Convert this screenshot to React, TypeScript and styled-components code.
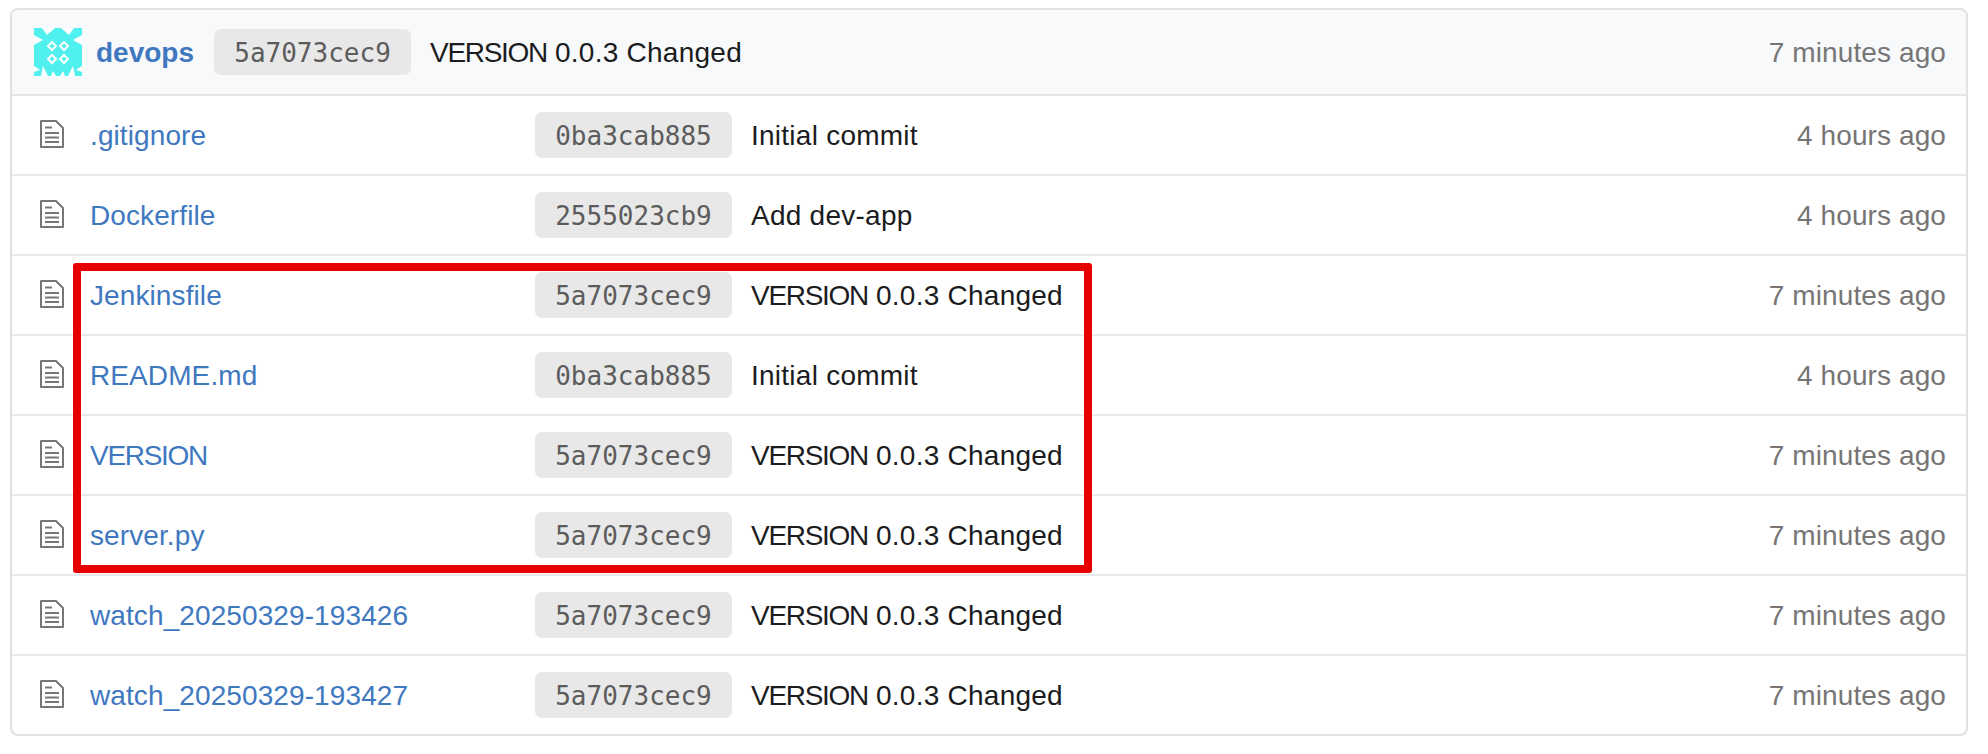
import React from 'react';
import styled, { createGlobalStyle } from 'styled-components';

const GlobalStyle = createGlobalStyle`
  html, body {
    margin: 0;
    padding: 0;
    background: #ffffff;
    font-family: "Liberation Sans", Arial, sans-serif;
  }
`;

const Page = styled.div`
  padding: 8px 20px 18px 10px;
`;

const Card = styled.div`
  position: relative;
  border: 2px solid #e0e1e2;
  border-radius: 8px;
`;

const HeaderRow = styled.div`
  display: flex;
  align-items: center;
  height: 84px;
  padding: 0 20px 0 22px;
  background: #f8f9fb;
  border-radius: 6px 6px 0 0;
  border-bottom: 2px solid #e3e4e5;
`;

const Avatar = styled.svg`
  width: 48px;
  height: 48px;
  flex: none;
  margin-right: 14px;
`;

const Owner = styled.a`
  padding-top: 2px;
  font-size: 28px;
  font-weight: 700;
  color: #4078c0;
  margin-right: 20px;
`;

const Row = styled.div<{ $last?: boolean }>`
  display: flex;
  align-items: center;
  height: 78px;
  padding: 0 20px 0 27px;
  border-bottom: ${props => (props.$last ? 'none' : '2px solid #e8e9ea')};
`;

const IconCell = styled.svg`
  width: 26px;
  height: 30px;
  flex: none;
  margin-right: 25px;
  margin-top: -3px;
`;

const FileName = styled.a`
  width: 445px;
  flex: none;
  padding-top: 2px;
  font-size: 28px;
  letter-spacing: 0.1px;
  color: #4078c0;
`;

const Hash = styled.span`
  flex: none;
  display: inline-flex;
  align-items: center;
  justify-content: center;
  box-sizing: border-box;
  width: 197px;
  height: 46px;
  padding-top: 1px;
  background: #e8e8e8;
  border-radius: 7px;
  font-family: "DejaVu Sans Mono", "Liberation Mono", monospace;
  font-size: 26px;
  color: #5c5c5c;
`;

const Message = styled.span`
  flex: 1;
  margin-left: 19px;
  padding-top: 2px;
  font-size: 28px;
  letter-spacing: 0.25px;
  color: #1b1c1d;
`;

// the capitals sit closer together in the reference's font
const Kerned = styled.span`
  letter-spacing: -1.3px;
`;

const Age = styled.span`
  flex: none;
  padding-top: 2px;
  font-size: 28px;
  letter-spacing: 0.1px;
  color: #767676;
`;

const Highlight = styled.div`
  position: absolute;
  left: 61px;
  top: 253px;
  width: 1003px;
  height: 294px;
  border: 8px solid #e60000;
  border-radius: 3px;
  pointer-events: none;
`;

const rows = [
  { name: '.gitignore', hash: '0ba3cab885', message: 'Initial commit', age: '4 hours ago' },
  { name: 'Dockerfile', hash: '2555023cb9', message: 'Add dev-app', age: '4 hours ago' },
  { name: 'Jenkinsfile', hash: '5a7073cec9', message: 'VERSION 0.0.3 Changed', age: '7 minutes ago' },
  { name: 'README.md', hash: '0ba3cab885', message: 'Initial commit', age: '4 hours ago' },
  { name: 'VERSION', hash: '5a7073cec9', message: 'VERSION 0.0.3 Changed', age: '7 minutes ago' },
  { name: 'server.py', hash: '5a7073cec9', message: 'VERSION 0.0.3 Changed', age: '7 minutes ago' },
  { name: 'watch_20250329-193426', hash: '5a7073cec9', message: 'VERSION 0.0.3 Changed', age: '7 minutes ago' },
  { name: 'watch_20250329-193427', hash: '5a7073cec9', message: 'VERSION 0.0.3 Changed', age: '7 minutes ago' },
];

const withKerning = (text: string) =>
  text.startsWith('VERSION') ? (
    <>
      <Kerned>VERSION</Kerned>
      {text.slice(7)}
    </>
  ) : (
    text
  );

const FileIcon = () => (
  <IconCell viewBox="0 0 26 30" fill="none" stroke="#767676" strokeWidth="2">
    <path d="M2 2H17L24 9V28H2Z" strokeLinejoin="round" />
    <path d="M6 8.5H13M6 14H20M6 18.5H20M6 23H20" />
  </IconCell>
);

// identicon from the repository owner
const OwnerAvatar = () => (
  <Avatar viewBox="0 0 48 48">
    <rect width="48" height="48" fill="#50f0ee" />
    <path
      fill="#ffffff"
      d="M8 0H21L13 7ZM27 0H40L35 7ZM0 7V17L9 12ZM48 7V17L39 12ZM0 38V44L6 42ZM48 38V44L42 42ZM7 48H14L9 38ZM34 48H41L39 38ZM17 48H22L19 43ZM26 48H31L29 43Z"
    />
    <g fill="#50f0ee" stroke="#ffffff" strokeWidth="2">
      <path d="M18 14L22 18L18 22L14 18Z" />
      <path d="M30 14L34 18L30 22L26 18Z" />
      <path d="M18 27L22 31L18 35L14 31Z" />
      <path d="M30 27L34 31L30 35L26 31Z" />
    </g>
  </Avatar>
);

const App: React.FC = () => {
  return (
    <Page>
      <GlobalStyle />
      <Card>
        <HeaderRow>
          <OwnerAvatar />
          <Owner>devops</Owner>
          <Hash>5a7073cec9</Hash>
          <Message>{withKerning('VERSION 0.0.3 Changed')}</Message>
          <Age>7 minutes ago</Age>
        </HeaderRow>
        {rows.map((row, index) => (
          <Row key={row.name} $last={index === rows.length - 1}>
            <FileIcon />
            <FileName>{withKerning(row.name)}</FileName>
            <Hash>{row.hash}</Hash>
            <Message>{withKerning(row.message)}</Message>
            <Age>{row.age}</Age>
          </Row>
        ))}
        <Highlight />
      </Card>
    </Page>
  );
};

export default App;
